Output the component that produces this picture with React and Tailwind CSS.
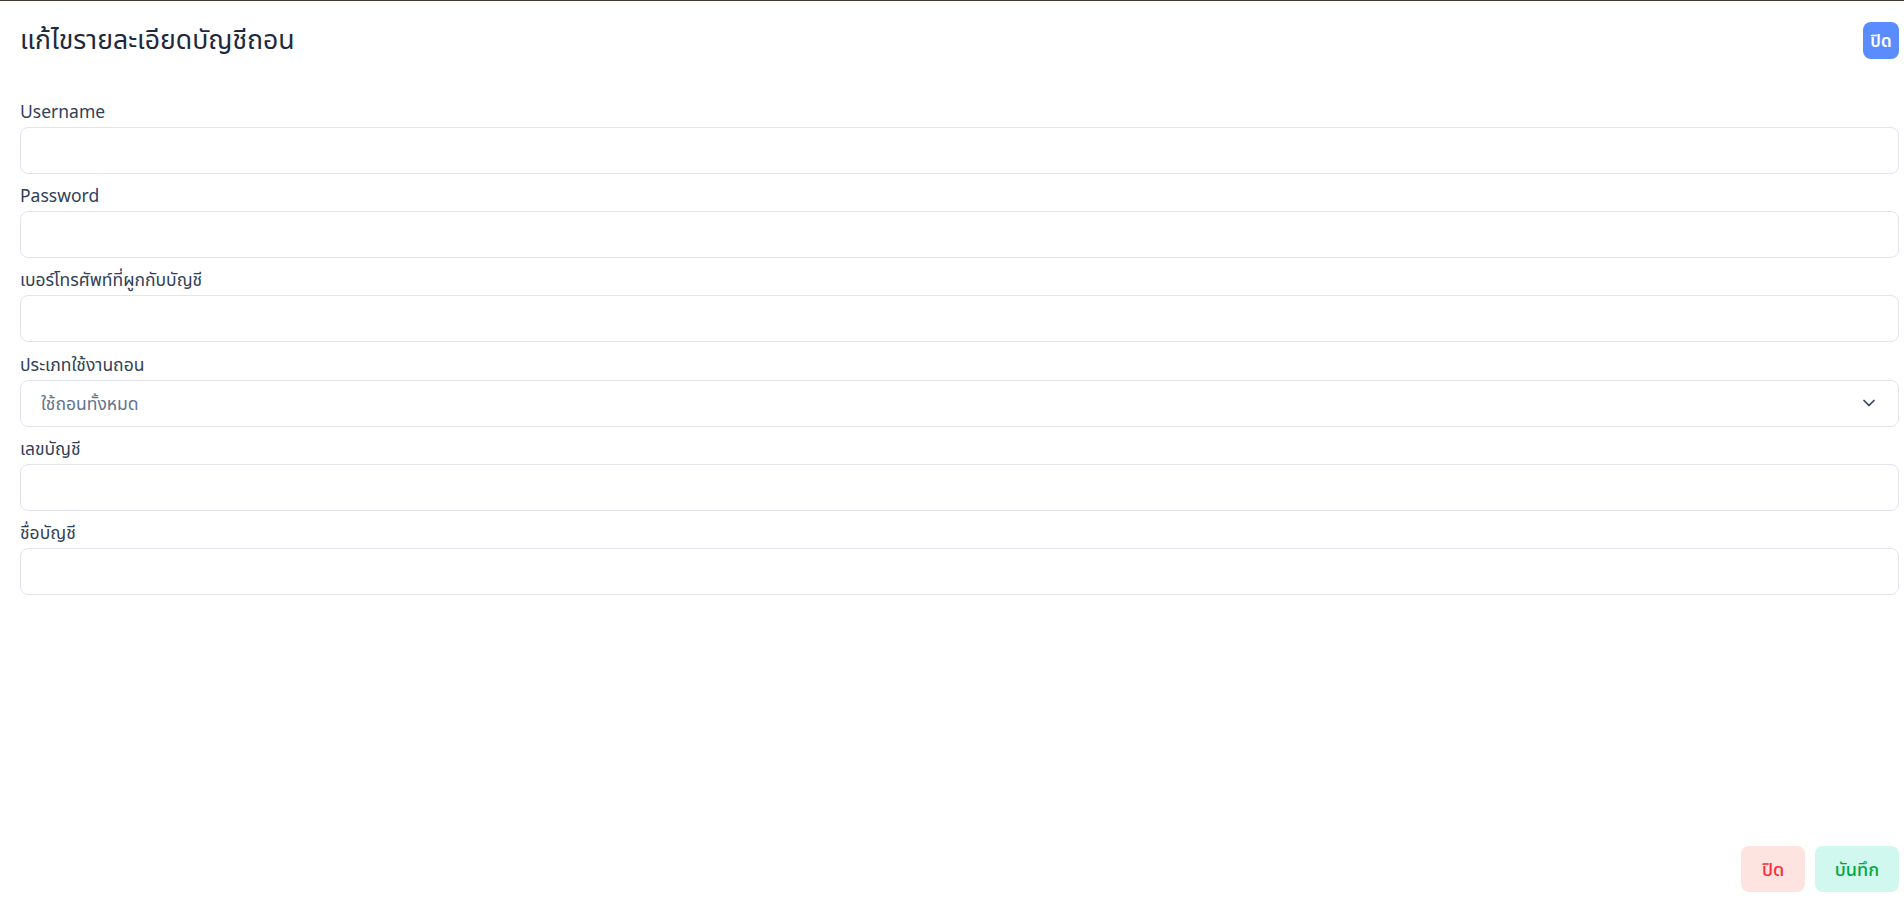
import { ChevronDown } from 'lucide-react';

const fields = [
  { id: 'username', label: 'Username' },
  { id: 'password', label: 'Password', type: 'password' },
  { id: 'phone', label: 'เบอร์โทรศัพท์ที่ผูกกับบัญชี' },
  { id: 'withdrawType', label: 'ประเภทใช้งานถอน', select: true },
  { id: 'accountNo', label: 'เลขบัญชี' },
  { id: 'accountName', label: 'ชื่อบัญชี' },
];

export default function App() {
  return (
    <div
      className="flex flex-col min-h-[907px] bg-white border-t border-[#453a30] pl-5 pr-[5px] text-slate-700"
      style={{ fontFamily: '"Noto Sans", "Noto Sans Thai", sans-serif' }}
    >
      {/* header */}
      <div className="flex items-start justify-between pt-[21px]">
        <h1 className="text-[26.6px] leading-9 -mt-[1px] text-slate-800">แก้ไขรายละเอียดบัญชีถอน</h1>
        <button className="w-9 h-[37px] rounded-lg bg-[#5b8cff] text-white text-[17px] font-semibold">
          ปิด
        </button>
      </div>

      {/* form */}
      <form className="flex flex-col gap-[9.2px] mt-[40px]">
        {fields.map((f) => (
          <div key={f.id} className="flex flex-col">
            <label htmlFor={f.id} className="text-[17.5px] leading-6 mb-1 text-slate-700">
              {f.label}
            </label>
            {f.select ? (
              <div className="relative">
                <select
                  id={f.id}
                  className="appearance-none w-full h-[47px] pl-5 pr-10 rounded-lg border border-[#e2e5f0] bg-white text-[17.5px] text-slate-500 outline-none"
                  defaultValue="all"
                >
                  <option value="all">ใช้ถอนทั้งหมด</option>
                </select>
                <ChevronDown
                  className="absolute right-[20px] top-1/2 -translate-y-1/2 w-5 h-5 text-slate-700 pointer-events-none"
                  strokeWidth={2}
                />
              </div>
            ) : (
              <input
                id={f.id}
                type={f.type || 'text'}
                className="w-full h-[47px] px-5 rounded-lg border border-[#e2e5f0] bg-white text-[17.5px] outline-none"
              />
            )}
          </div>
        ))}
      </form>

      {/* footer */}
      <div className="mt-auto flex justify-end gap-[10px] pb-[15px]">
        <button className="w-16 h-[46px] rounded-lg bg-[#fee4e0] text-red-500 text-lg font-medium">ปิด</button>
        <button className="w-[84px] h-[46px] rounded-lg bg-[#d1f8ef] text-green-600 text-lg font-medium">บันทึก</button>
      </div>
    </div>
  );
}
